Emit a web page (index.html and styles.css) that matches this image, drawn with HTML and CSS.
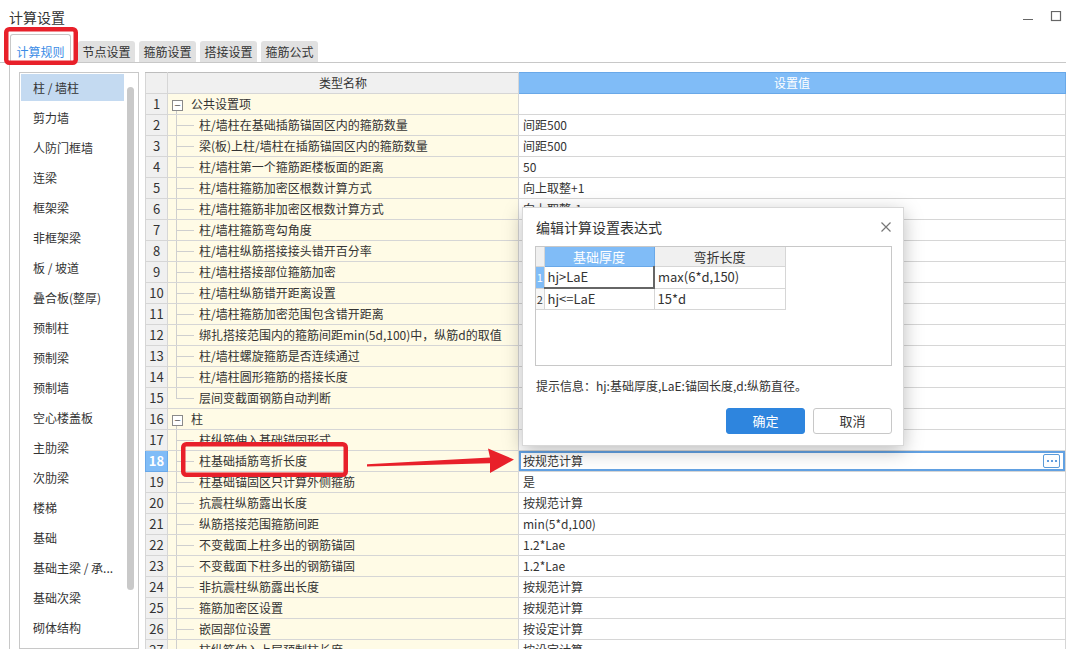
FILE: index.html
```html
<!DOCTYPE html>
<html lang="zh-CN">
<head>
<meta charset="utf-8">
<title>计算设置</title>
<link rel="stylesheet" href="styles.css">
</head>
<body>
<div class="window">
  <header class="titlebar">
    <span class="title">计算设置</span>
    <svg class="controls" width="42" height="12" viewBox="0 0 42 12">
      <line x1="2" y1="8.5" x2="12" y2="8.5" stroke="#666" stroke-width="1"/>
      <rect x="30.5" y="0.5" width="9" height="9" fill="none" stroke="#666" stroke-width="1.2"/>
    </svg>
  </header>
  <nav class="tabs">
    <span class="tab active">计算规则</span>
    <span class="tab">节点设置</span>
    <span class="tab">箍筋设置</span>
    <span class="tab">搭接设置</span>
    <span class="tab">箍筋公式</span>
  </nav>
  <div class="main">
    <aside class="list">
      <ul class="items">
        <li class="item selected">柱 / 墙柱</li>
        <li class="item">剪力墙</li>
        <li class="item">人防门框墙</li>
        <li class="item">连梁</li>
        <li class="item">框架梁</li>
        <li class="item">非框架梁</li>
        <li class="item">板 / 坡道</li>
        <li class="item">叠合板(整厚)</li>
        <li class="item">预制柱</li>
        <li class="item">预制梁</li>
        <li class="item">预制墙</li>
        <li class="item">空心楼盖板</li>
        <li class="item">主肋梁</li>
        <li class="item">次肋梁</li>
        <li class="item">楼梯</li>
        <li class="item">基础</li>
        <li class="item">基础主梁 / 承...</li>
        <li class="item">基础次梁</li>
        <li class="item">砌体结构</li>
      </ul>
      <div class="scroll"><div class="thumb"></div></div>
    </aside>
    <div class="grid">
      <table class="sheet">
        <colgroup><col class="c-num"><col class="c-name"><col></colgroup>
        <thead>
          <tr><th class="num"></th><th class="name-h">类型名称</th><th class="val-h">设置值</th></tr>
        </thead>
        <tbody>
          <tr><td class="num">1</td><td class="name grp"><span class="toggle">−</span>公共设置项</td><td class="val"></td></tr>
          <tr><td class="num">2</td><td class="name"><span class="branch"></span>柱/墙柱在基础插筋锚固区内的箍筋数量</td><td class="val">间距500</td></tr>
          <tr><td class="num">3</td><td class="name"><span class="branch"></span>梁(板)上柱/墙柱在插筋锚固区内的箍筋数量</td><td class="val">间距500</td></tr>
          <tr><td class="num">4</td><td class="name"><span class="branch"></span>柱/墙柱第一个箍筋距楼板面的距离</td><td class="val">50</td></tr>
          <tr><td class="num">5</td><td class="name"><span class="branch"></span>柱/墙柱箍筋加密区根数计算方式</td><td class="val">向上取整+1</td></tr>
          <tr><td class="num">6</td><td class="name"><span class="branch"></span>柱/墙柱箍筋非加密区根数计算方式</td><td class="val">向上取整-1</td></tr>
          <tr><td class="num">7</td><td class="name"><span class="branch"></span>柱/墙柱箍筋弯勾角度</td><td class="val">135°</td></tr>
          <tr><td class="num">8</td><td class="name"><span class="branch"></span>柱/墙柱纵筋搭接接头错开百分率</td><td class="val">50%</td></tr>
          <tr><td class="num">9</td><td class="name"><span class="branch"></span>柱/墙柱搭接部位箍筋加密</td><td class="val">是</td></tr>
          <tr><td class="num">10</td><td class="name"><span class="branch"></span>柱/墙柱纵筋错开距离设置</td><td class="val">按规范计算</td></tr>
          <tr><td class="num">11</td><td class="name"><span class="branch"></span>柱/墙柱箍筋加密范围包含错开距离</td><td class="val">是</td></tr>
          <tr><td class="num">12</td><td class="name"><span class="branch"></span>绑扎搭接范围内的箍筋间距min(5d,100)中，纵筋d的取值</td><td class="val">上下搭接钢筋中较小值</td></tr>
          <tr><td class="num">13</td><td class="name"><span class="branch"></span>柱/墙柱螺旋箍筋是否连续通过</td><td class="val">是</td></tr>
          <tr><td class="num">14</td><td class="name"><span class="branch"></span>柱/墙柱圆形箍筋的搭接长度</td><td class="val">max(lae,300)</td></tr>
          <tr><td class="num">15</td><td class="name"><span class="branch last"></span>层间变截面钢筋自动判断</td><td class="val">是</td></tr>
          <tr><td class="num">16</td><td class="name grp"><span class="toggle">−</span>柱</td><td class="val"></td></tr>
          <tr><td class="num">17</td><td class="name"><span class="branch"></span>柱纵筋伸入基础锚固形式</td><td class="val">全部伸入基底弯折</td></tr>
          <tr><td class="num active">18</td><td class="name"><span class="branch"></span>柱基础插筋弯折长度</td><td class="val sel"><div class="selcell"><span>按规范计算</span><span class="more"><svg width="12" height="4" viewBox="0 0 12 4"><circle cx="2" cy="2" r="1.1" fill="#3d86d6"/><circle cx="6" cy="2" r="1.1" fill="#3d86d6"/><circle cx="10" cy="2" r="1.1" fill="#3d86d6"/></svg></span></div></td></tr>
          <tr><td class="num">19</td><td class="name"><span class="branch"></span>柱基础锚固区只计算外侧箍筋</td><td class="val">是</td></tr>
          <tr><td class="num">20</td><td class="name"><span class="branch"></span>抗震柱纵筋露出长度</td><td class="val">按规范计算</td></tr>
          <tr><td class="num">21</td><td class="name"><span class="branch"></span>纵筋搭接范围箍筋间距</td><td class="val">min(5*d,100)</td></tr>
          <tr><td class="num">22</td><td class="name"><span class="branch"></span>不变截面上柱多出的钢筋锚固</td><td class="val">1.2*Lae</td></tr>
          <tr><td class="num">23</td><td class="name"><span class="branch"></span>不变截面下柱多出的钢筋锚固</td><td class="val">1.2*Lae</td></tr>
          <tr><td class="num">24</td><td class="name"><span class="branch"></span>非抗震柱纵筋露出长度</td><td class="val">按规范计算</td></tr>
          <tr><td class="num">25</td><td class="name"><span class="branch"></span>箍筋加密区设置</td><td class="val">按规范计算</td></tr>
          <tr><td class="num">26</td><td class="name"><span class="branch"></span>嵌固部位设置</td><td class="val">按设定计算</td></tr>
          <tr><td class="num">27</td><td class="name"><span class="branch"></span>柱纵筋伸入上层预制柱长度</td><td class="val">按设定计算</td></tr>
        </tbody>
      </table>
    </div>
  </div>

  <section class="dialog">
    <div class="dlg-title">
      <span>编辑计算设置表达式</span>
      <svg class="close" width="10" height="10" viewBox="0 0 10 10"><path d="M0.5 0.5 L9.5 9.5 M9.5 0.5 L0.5 9.5" stroke="#777" stroke-width="1.2"/></svg>
    </div>
    <div class="etable-box">
      <table class="etable">
        <colgroup><col class="e-num"><col class="e-c1"><col class="e-c2"></colgroup>
        <thead><tr><th class="e-n"></th><th class="e-h1">基础厚度</th><th class="e-h2">弯折长度</th></tr></thead>
        <tbody>
          <tr><td class="e-n on">1</td><td class="e-cur">hj&gt;LaE</td><td>max(6*d,150)</td></tr>
          <tr><td class="e-n">2</td><td>hj&lt;=LaE</td><td>15*d</td></tr>
        </tbody>
      </table>
    </div>
    <p class="hint">提示信息：hj:基础厚度,LaE:锚固长度,d:纵筋直径。</p>
    <div class="actions">
      <span class="btn primary">确定</span>
      <span class="btn">取消</span>
    </div>
  </section>

  <svg class="annot" width="1066" height="649" viewBox="0 0 1066 649">
    <rect x="6.25" y="29.25" width="69.5" height="33.5" rx="3" fill="none" stroke="#e8202a" stroke-width="4.5"/>
    <rect x="183.25" y="444.25" width="162.5" height="30.5" rx="3" fill="none" stroke="#e8202a" stroke-width="4.5"/>
    <polygon points="367,464.2 490,457.6 488,448.5 514,459.5 490,473 490,463.2 367,466.6" fill="#e8202a"/>
  </svg>
</div>
</body>
</html>
```
FILE: styles.css
```css
* { box-sizing: border-box; }
body {
  margin: 0;
  font-family: "Noto Sans CJK SC", "Noto Sans", sans-serif;
  font-size: 12px;
  color: #333;
  background: #fff;
}
.window {
  position: relative;
  width: 1066px;
  height: 649px;
  overflow: hidden;
  display: flex;
  flex-direction: column;
}
.titlebar {
  height: 29px;
  flex: none;
  display: flex;
  justify-content: space-between;
  align-items: flex-start;
  padding-left: 9px;
}
.title {
  font-size: 14px;
  line-height: 20px;
  margin-top: 7px;
  color: #333;
}
.controls { margin: 11px 3px 0 0; }

.tabs {
  flex: none;
  height: 34px;
  display: flex;
  align-items: flex-end;
  gap: 4px;
  padding-left: 10px;
  border-bottom: 1px solid #c8c8c8;
}
.tab {
  height: 21px;
  line-height: 21px;
  width: 57px;
  text-align: center;
  background: #e1e1e1;
  border-radius: 3px 3px 0 0;
  color: #333;
  white-space: nowrap;
}
.tab.active {
  height: 29px;
  width: 61px;
  padding-top: 6px;
  line-height: 22px;
  text-align: center;
  background: #fff;
  border: 1px solid #c8c8c8;
  border-bottom: none;
  margin-bottom: -1px;
  margin-right: 3px;
  color: #3b8ce6;
}

.main {
  flex: 1;
  min-height: 0;
  display: flex;
  margin-left: 9px;
  border-left: 1px solid #c8c8c8;
  padding: 9px 0 0 9px;
  gap: 6px;
}
.list {
  flex: none;
  width: 120px;
  border: 1px solid #c8c8c8;
  padding: 1px;
  display: flex;
  overflow: hidden;
}
.items {
  list-style: none;
  margin: 0;
  padding: 0;
  width: 103px;
  flex: none;
}
.item {
  height: 27px;
  line-height: 27px;
  margin-bottom: 3px;
  padding-left: 12px;
  white-space: nowrap;
  overflow: hidden;
  color: #333;
}
.item.selected { background: #c4daf1; }
.scroll { margin-left: 3px; width: 7px; flex: none; }
.thumb {
  margin-top: 13px;
  height: 503px;
  border-radius: 4px;
  background: #c9c9c9;
}

.grid { flex: 1; min-width: 0; overflow: hidden; }
.sheet {
  width: 921px;
  table-layout: fixed;
  border-collapse: collapse;
}
.c-num { width: 22px; }
.c-name { width: 351px; }
.sheet th, .sheet td {
  height: 20px;
  line-height: 20px;
  padding: 0;
  border: 1px solid #d6d6d6;
  white-space: nowrap;
  overflow: hidden;
  font-weight: normal;
}
.sheet thead th { border-top-color: #bdbdbd; }
.sheet th { background: #f0f0f0; color: #333; text-align: center; }
.sheet th.val-h {
  background: #80bcf7;
  color: #fff;
  border-color: #69a8e8;
}
.sheet td.num {
  background: #f0f0f0;
  text-align: center;
  color: #333;
  font-size: 13px;
}
.sheet td.num.active {
  background: #80bcf7;
  color: #fff;
  font-weight: bold;
  border-color: #69a8e8;
}
.sheet td.name { background: #fffbe6; }
.sheet td.name.grp {
  background: linear-gradient(#c8c8c8, #c8c8c8) no-repeat 8px 15px / 1px 6px, #fffbe6;
}
.sheet td.val { padding-left: 4px; background: #fff; color: #333; }
.toggle {
  display: inline-block;
  width: 11px;
  height: 11px;
  margin: 0 8px 0 4px;
  border: 1px solid #8a8a8a;
  line-height: 8px;
  font-size: 11px;
  text-align: center;
  vertical-align: -1px;
  color: #555;
  background: #fff;
}
.branch {
  display: inline-block;
  width: 31px;
  height: 20px;
  vertical-align: top;
  background:
    linear-gradient(#cfcfcf, #cfcfcf) no-repeat 8px 0 / 1px 21px,
    linear-gradient(#cfcfcf, #cfcfcf) no-repeat 8px 10px / 18px 1px;
}
.branch.last {
  background:
    linear-gradient(#cfcfcf, #cfcfcf) no-repeat 8px 0 / 1px 11px,
    linear-gradient(#cfcfcf, #cfcfcf) no-repeat 8px 10px / 18px 1px;
}
.sheet td.val.sel {
  box-shadow: inset 0 0 0 2px #62a1e2;
  padding-left: 4px;
}
.selcell {
  display: flex;
  justify-content: space-between;
  align-items: center;
  height: 20px;
  padding-right: 5px;
}
.more {
  width: 17px;
  height: 14px;
  border: 1px solid #5b9bd8;
  border-radius: 2px;
  display: flex;
  align-items: center;
  justify-content: center;
  background: #fff;
}

.dialog {
  position: absolute;
  left: 522px;
  top: 207px;
  width: 382px;
  height: 239px;
  background: #fff;
  border: 1px solid #d8d8d8;
  box-shadow: 0 5px 18px rgba(0, 0, 0, 0.26);
}
.dlg-title {
  height: 38px;
  display: flex;
  justify-content: space-between;
  align-items: center;
  padding: 0 12px 0 13px;
  font-size: 14px;
  color: #333;
}
.etable-box {
  margin: 0 11px 0 12px;
  height: 120px;
  border: 1px solid #c8c8c8;
}
.etable {
  width: 249px;
  table-layout: fixed;
  border-collapse: collapse;
  font-size: 13px;
}
.e-num { width: 8px; }
.e-c1 { width: 110px; }
.e-c2 { width: 131px; }
.etable th, .etable td {
  padding: 0;
  border: 1px solid #d6d6d6;
  white-space: nowrap;
  overflow: hidden;
  font-weight: normal;
  color: #333;
}
.etable th { height: 19px; line-height: 19px; background: #f0f0f0; text-align: center; }
.etable td { height: 20px; line-height: 20px; padding-left: 3px; }
.etable thead th:first-child, .etable td:first-child { border-left: none; }
.etable thead th { border-top: none; }
.etable th.e-h1 { background: #80bcf7; color: #fff; border-color: #69a8e8; }
.etable td.e-n {
  padding: 0;
  text-align: center;
  font-size: 11px;
  background: #f7f7f7;
}
.etable td.e-n.on { background: #80bcf7; color: #fff; }
.etable td.e-cur {
  border-right: 2px solid #666;
  border-bottom: 2px solid #666;
}
.hint {
  margin: 11px 0 0 13px;
  line-height: 18px;
  font-size: 12px;
  color: #333;
}
.actions {
  display: flex;
  justify-content: flex-end;
  gap: 8px;
  margin: 13px 11px 0 0;
}
.btn {
  width: 79px;
  height: 26px;
  line-height: 24px;
  text-align: center;
  font-size: 13px;
  border: 1px solid #c8c8c8;
  border-radius: 3px;
  background: #fff;
  color: #333;
}
.btn.primary {
  background: #2e85de;
  border-color: #2e85de;
  color: #fff;
}
.annot {
  position: absolute;
  left: 0;
  top: 0;
  pointer-events: none;
}
```
